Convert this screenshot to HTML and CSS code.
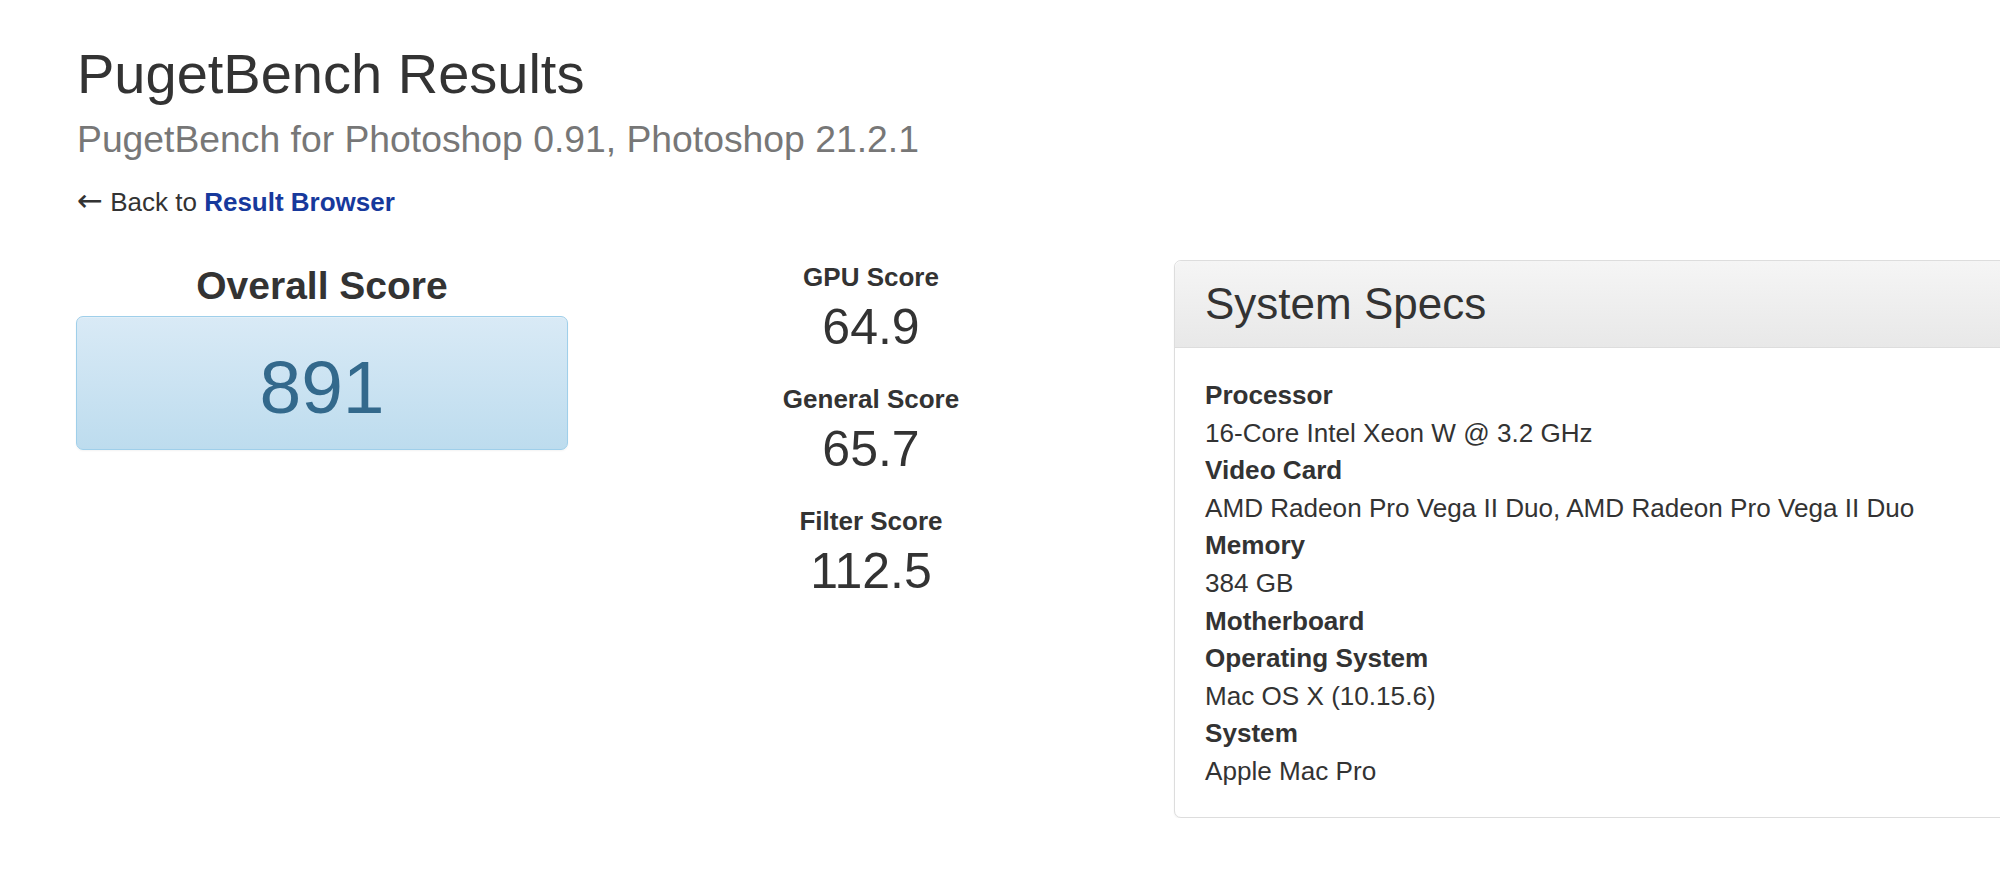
FILE: index.html
```html
<!DOCTYPE html>
<html lang="en">
<head>
<meta charset="utf-8">
<title>PugetBench Results</title>
<link rel="stylesheet" href="styles.css">
</head>
<body>
<div class="page">
  <h1 class="title">PugetBench Results</h1>
  <div class="subtitle">PugetBench for Photoshop 0.91, Photoshop 21.2.1</div>
  <div class="back"><span class="arrow">&larr;</span> Back to <a href="#" class="back-link">Result Browser</a></div>

  <div class="results">
    <div class="overall">
      <h2 class="overall-title">Overall Score</h2>
      <div class="overall-box">891</div>
    </div>

    <div class="scores">
      <div class="score">
        <div class="score-label">GPU Score</div>
        <div class="score-value">64.9</div>
      </div>
      <div class="score">
        <div class="score-label">General Score</div>
        <div class="score-value">65.7</div>
      </div>
      <div class="score">
        <div class="score-label">Filter Score</div>
        <div class="score-value">112.5</div>
      </div>
    </div>

    <div class="panel">
      <div class="panel-heading">System Specs</div>
      <dl class="panel-body">
        <dt>Processor</dt>
        <dd>16-Core Intel Xeon W @ 3.2 GHz</dd>
        <dt>Video Card</dt>
        <dd>AMD Radeon Pro Vega II Duo, AMD Radeon Pro Vega II Duo</dd>
        <dt>Memory</dt>
        <dd>384 GB</dd>
        <dt>Motherboard</dt>
        <dt>Operating System</dt>
        <dd>Mac OS X (10.15.6)</dd>
        <dt>System</dt>
        <dd>Apple Mac Pro</dd>
      </dl>
    </div>
  </div>
</div>
</body>
</html>
```

FILE: styles.css
```css
html, body {
  margin: 0;
  padding: 0;
  background: #ffffff;
  overflow: hidden;
}

body {
  font-family: "Liberation Sans", Arial, Helvetica, sans-serif;
  color: #333333;
}

.page {
  padding: 43px 0 0 77px;
}

.title {
  margin: 0;
  font-size: 56px;
  font-weight: normal;
  line-height: 62px;
  color: #333333;
}

.subtitle {
  margin-top: 12px;
  font-size: 37.3px;
  line-height: 44px;
  color: #777777;
}

.back {
  margin-top: 26px;
  font-size: 26px;
  line-height: 30px;
  color: #333333;
}

.arrow {
  font-family: "DejaVu Sans", sans-serif;
  font-size: 31px;
  line-height: 20px;
}

.back-link {
  color: #17399c;
  font-weight: bold;
  text-decoration: none;
}

.results {
  display: flex;
  align-items: flex-start;
  margin-top: 45px;
}

.overall {
  width: 492px;
  margin-left: -1px;
  flex: none;
}

.overall-title {
  margin: 0;
  font-size: 39px;
  font-weight: bold;
  line-height: 48px;
  text-align: center;
  color: #333333;
}

.overall-box {
  margin-top: 6px;
  padding-top: 10px;
  height: 122px;
  line-height: 120px;
  font-size: 75px;
  text-align: center;
  color: #33698c;
  border: 1px solid #9fcfea;
  border-radius: 7px;
  background: linear-gradient(to bottom, #d9eaf6 0%, #bddcee 100%);
  box-shadow: inset 0 1px 0 rgba(255,255,255,0.25), 0 1px 2px rgba(0,0,0,0.05);
}

.scores {
  width: 306px;
  margin-left: 150px;
  flex: none;
  text-align: center;
}

.score {
  margin-bottom: 22px;
}

.score-label {
  font-size: 26px;
  font-weight: bold;
  line-height: 30px;
}

.score-value {
  font-size: 50px;
  line-height: 70px;
}

.panel {
  width: 880px;
  margin-left: 150px;
  margin-top: -2px;
  flex: none;
  border: 1px solid #dddddd;
  border-radius: 7px;
  background: #ffffff;
  box-shadow: 0 1px 2px rgba(0,0,0,0.06);
}

.panel-heading {
  height: 86px;
  line-height: 86px;
  padding-left: 30px;
  font-size: 44px;
  color: #333333;
  border-bottom: 1px solid #dddddd;
  border-radius: 7px 7px 0 0;
  background: linear-gradient(to bottom, #f5f5f5 0%, #e8e8e8 100%);
}

.panel-body {
  margin: 0;
  padding: 29px 30px 26px;
  font-size: 26.1px;
  line-height: 37.6px;
}

.panel-body dt {
  font-weight: bold;
}

.panel-body dd {
  margin: 0;
}
```
